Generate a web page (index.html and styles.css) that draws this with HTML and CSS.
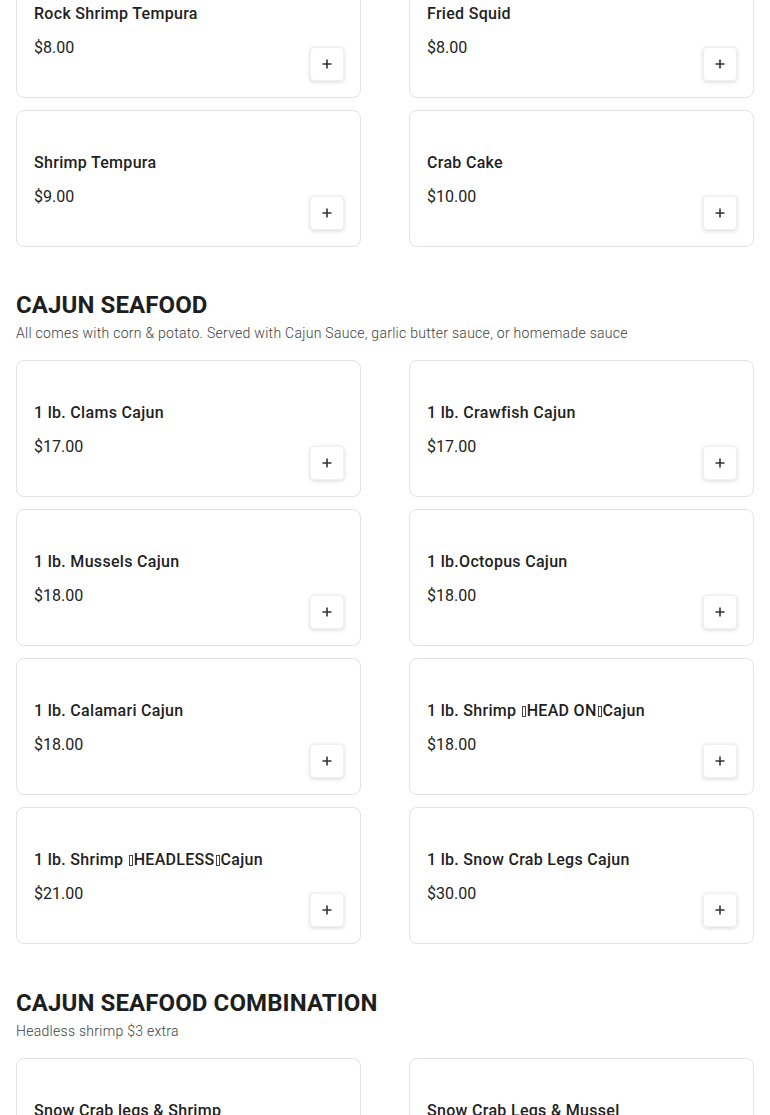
FILE: index.html
```html
<!DOCTYPE html>
<html lang="en">
<head>
<meta charset="utf-8">
<title>Menu</title>
<link rel="stylesheet" href="styles.css">
</head>
<body>
<main class="menu">
  <div class="grid grid-first">
    <div class="card"><div class="name">Rock Shrimp Tempura</div><div class="price">$8.00</div><button class="add" aria-label="Add"><svg viewBox="0 0 12 12" width="12" height="12"><path d="M6 1.5v9M1.5 6h9" stroke="#333" stroke-width="1.6" fill="none"/></svg></button></div>
    <div class="card"><div class="name">Fried Squid</div><div class="price">$8.00</div><button class="add" aria-label="Add"><svg viewBox="0 0 12 12" width="12" height="12"><path d="M6 1.5v9M1.5 6h9" stroke="#333" stroke-width="1.6" fill="none"/></svg></button></div>
    <div class="card"><div class="name">Shrimp Tempura</div><div class="price">$9.00</div><button class="add" aria-label="Add"><svg viewBox="0 0 12 12" width="12" height="12"><path d="M6 1.5v9M1.5 6h9" stroke="#333" stroke-width="1.6" fill="none"/></svg></button></div>
    <div class="card"><div class="name">Crab Cake</div><div class="price">$10.00</div><button class="add" aria-label="Add"><svg viewBox="0 0 12 12" width="12" height="12"><path d="M6 1.5v9M1.5 6h9" stroke="#333" stroke-width="1.6" fill="none"/></svg></button></div>
  </div>

  <section class="section">
    <h2 class="section-title">CAJUN SEAFOOD</h2>
    <p class="section-sub">All comes with corn &amp; potato. Served with Cajun Sauce, garlic butter sauce, or homemade sauce</p>
    <div class="grid">
      <div class="card"><div class="name">1 lb. Clams Cajun</div><div class="price">$17.00</div><button class="add" aria-label="Add"><svg viewBox="0 0 12 12" width="12" height="12"><path d="M6 1.5v9M1.5 6h9" stroke="#333" stroke-width="1.6" fill="none"/></svg></button></div>
      <div class="card"><div class="name">1 lb. Crawfish Cajun</div><div class="price">$17.00</div><button class="add" aria-label="Add"><svg viewBox="0 0 12 12" width="12" height="12"><path d="M6 1.5v9M1.5 6h9" stroke="#333" stroke-width="1.6" fill="none"/></svg></button></div>
      <div class="card"><div class="name">1 lb. Mussels Cajun</div><div class="price">$18.00</div><button class="add" aria-label="Add"><svg viewBox="0 0 12 12" width="12" height="12"><path d="M6 1.5v9M1.5 6h9" stroke="#333" stroke-width="1.6" fill="none"/></svg></button></div>
      <div class="card"><div class="name">1 lb.Octopus Cajun</div><div class="price">$18.00</div><button class="add" aria-label="Add"><svg viewBox="0 0 12 12" width="12" height="12"><path d="M6 1.5v9M1.5 6h9" stroke="#333" stroke-width="1.6" fill="none"/></svg></button></div>
      <div class="card"><div class="name">1 lb. Calamari Cajun</div><div class="price">$18.00</div><button class="add" aria-label="Add"><svg viewBox="0 0 12 12" width="12" height="12"><path d="M6 1.5v9M1.5 6h9" stroke="#333" stroke-width="1.6" fill="none"/></svg></button></div>
      <div class="card"><div class="name">1 lb. Shrimp <span class="tofu">（</span>HEAD ON<span class="tofu">）</span>Cajun</div><div class="price">$18.00</div><button class="add" aria-label="Add"><svg viewBox="0 0 12 12" width="12" height="12"><path d="M6 1.5v9M1.5 6h9" stroke="#333" stroke-width="1.6" fill="none"/></svg></button></div>
      <div class="card"><div class="name">1 lb. Shrimp <span class="tofu">（</span>HEADLESS<span class="tofu">）</span>Cajun</div><div class="price">$21.00</div><button class="add" aria-label="Add"><svg viewBox="0 0 12 12" width="12" height="12"><path d="M6 1.5v9M1.5 6h9" stroke="#333" stroke-width="1.6" fill="none"/></svg></button></div>
      <div class="card"><div class="name">1 lb. Snow Crab Legs Cajun</div><div class="price">$30.00</div><button class="add" aria-label="Add"><svg viewBox="0 0 12 12" width="12" height="12"><path d="M6 1.5v9M1.5 6h9" stroke="#333" stroke-width="1.6" fill="none"/></svg></button></div>
    </div>
  </section>

  <section class="section section-next">
    <h2 class="section-title">CAJUN SEAFOOD COMBINATION</h2>
    <p class="section-sub">Headless shrimp $3 extra</p>
    <div class="grid">
      <div class="card"><div class="name">Snow Crab legs &amp; Shrimp</div><div class="price">$35.00</div><button class="add" aria-label="Add"><svg viewBox="0 0 12 12" width="12" height="12"><path d="M6 1.5v9M1.5 6h9" stroke="#333" stroke-width="1.6" fill="none"/></svg></button></div>
      <div class="card"><div class="name">Snow Crab Legs &amp; Mussel</div><div class="price">$35.00</div><button class="add" aria-label="Add"><svg viewBox="0 0 12 12" width="12" height="12"><path d="M6 1.5v9M1.5 6h9" stroke="#333" stroke-width="1.6" fill="none"/></svg></button></div>
    </div>
  </section>
</main>
</body>
</html>
```

FILE: styles.css
```css
* { box-sizing: border-box; }
html, body { margin: 0; padding: 0; background: #fff; }
body {
  font-family: Roboto, "Liberation Sans", Arial, sans-serif;
  color: #212121;
  overflow: hidden;
}
.menu { padding: 0 16px; }
.grid {
  display: grid;
  grid-template-columns: 1fr 1fr;
  column-gap: 48px;
  row-gap: 12px;
}
.grid-first { margin-top: -39px; }
.section { margin-top: 42px; }
.section-next { margin-top: 43px; }
.section-title {
  margin: 0;
  font-size: 24px;
  line-height: 32px;
  font-weight: 700;
  color: #1e1e1e;
  letter-spacing: 0.1px;
}
.section-sub {
  margin: 2px 0 17px;
  font-size: 14px;
  line-height: 20px;
  font-weight: 300;
  color: #3e3e3e;
  letter-spacing: 0.28px;
}
.card {
  display: grid;
  grid-template-columns: 1fr auto;
  grid-template-rows: auto auto 1fr;
  min-height: 137px;
  padding: 41px 16px 16px 17px;
  border: 1px solid #e3e3e3;
  border-radius: 8px;
  background: #fff;
}
.name {
  grid-column: 1;
  grid-row: 1;
  font-size: 16px;
  line-height: 22px;
  font-weight: 500;
  color: #1f1f1f;
  letter-spacing: 0.3px;
}
.price {
  grid-column: 1;
  grid-row: 2;
  margin-top: 12px;
  font-size: 16px;
  line-height: 22px;
  color: #222;
}
.add {
  grid-column: 2;
  grid-row: 1 / 4;
  align-self: end;
  width: 34px;
  height: 34px;
  padding: 0;
  border: 1px solid #f0f0f0;
  border-radius: 4px;
  background: #fff;
  box-shadow: 0 1px 4px rgba(0,0,0,0.16);
  display: flex;
  align-items: center;
  justify-content: center;
  cursor: pointer;
}
.add svg { display: block; }
.tofu {
  display: inline-block;
  width: 4px;
  height: 11px;
  margin: 0 1px 0 1px;
  border: 1px solid #444;
  font-size: 0;
  vertical-align: -1px;
  overflow: hidden;
}
```
